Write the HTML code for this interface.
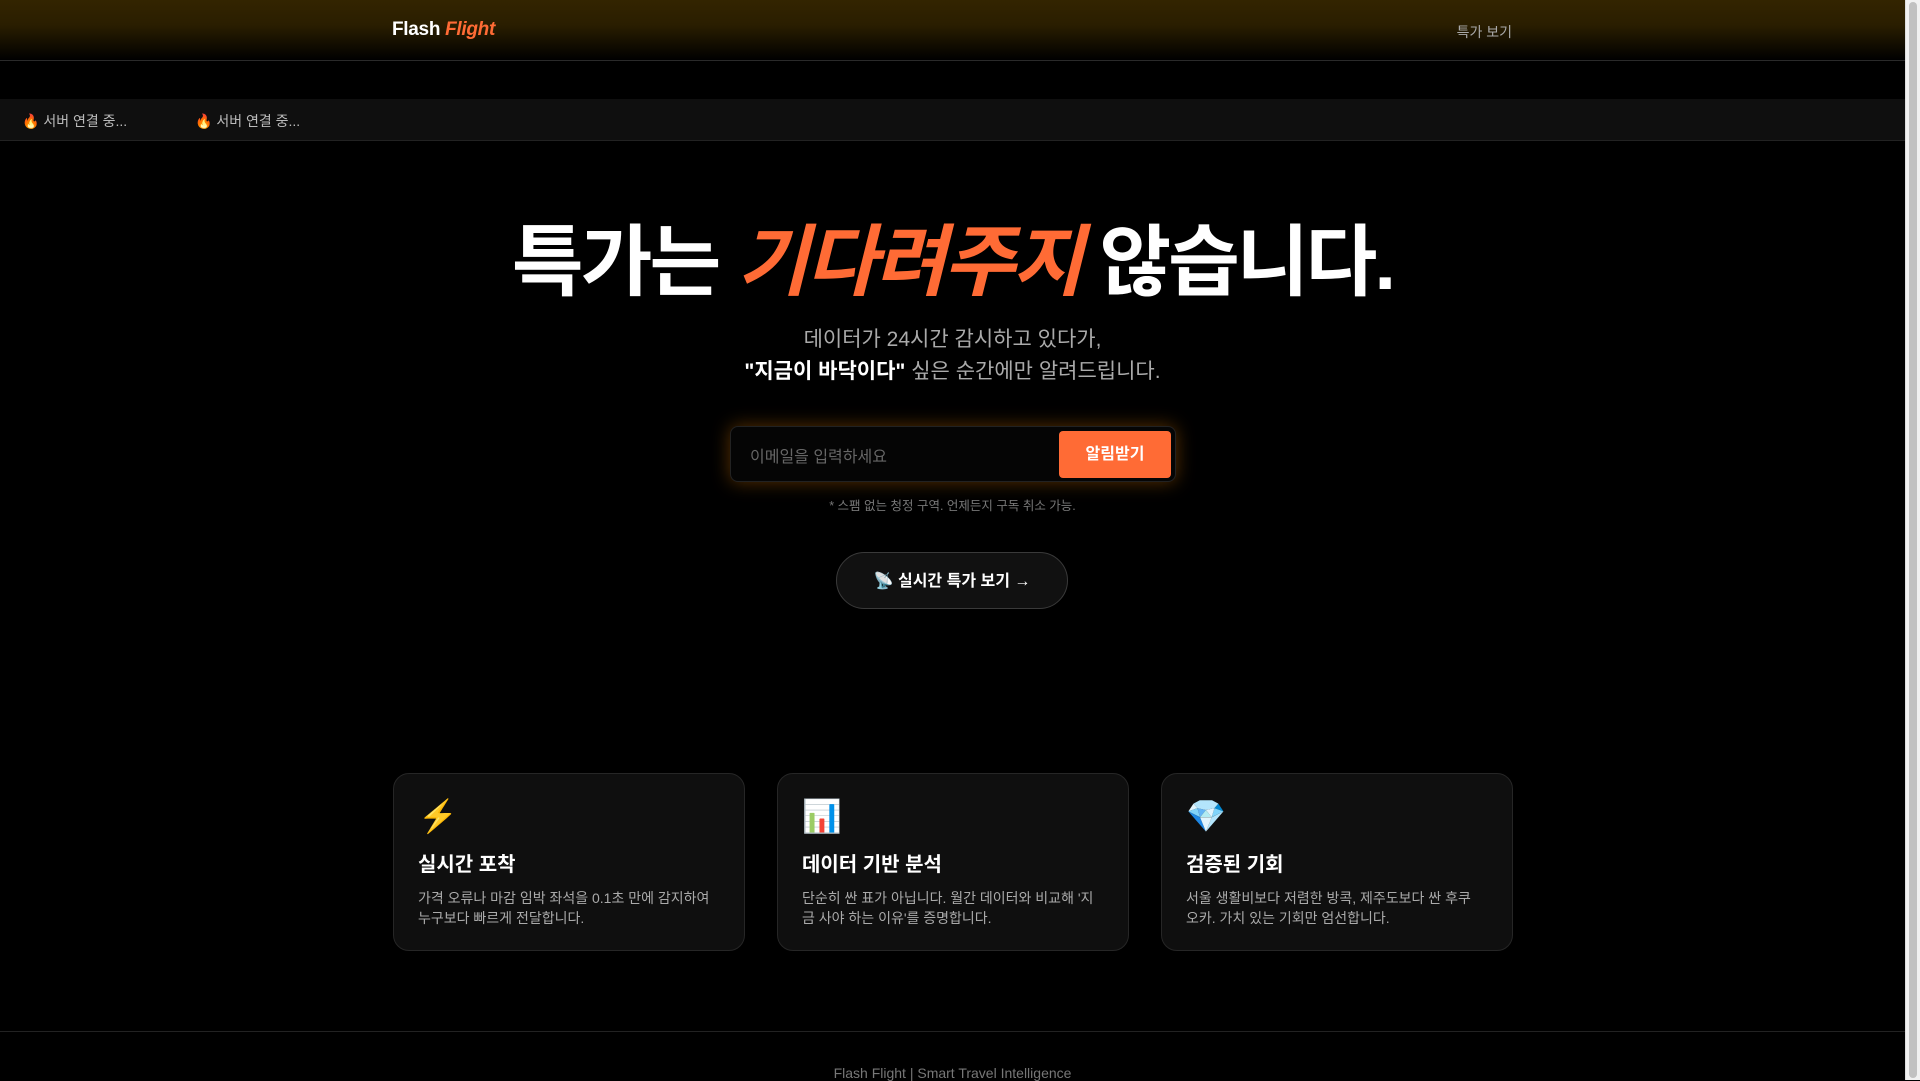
<!DOCTYPE html>
<html><head><meta charset="utf-8"><style>
*{margin:0;padding:0;box-sizing:border-box}
html,body{width:1920px;height:1080px;overflow:hidden;background:#000;font-family:"Liberation Sans","Noto Sans CJK KR",sans-serif;color:#fff}
.sb{position:absolute;right:0;top:0;width:15px;height:1080px;background:#f1f1f1;border-left:1px solid #ddd}
.sb::after{content:"";position:absolute;left:3px;top:2px;width:8px;height:1076px;background:#c1c1c1;border-radius:4px}
.page{position:absolute;left:0;top:0;width:1905px;height:1080px}
header{height:61px;border-bottom:1px solid #2a2a2a;background:linear-gradient(#332400 0px,#2a1e00 25px,#000 60px);position:relative}
.logo{position:absolute;left:392px;top:19px;font-size:19px;font-weight:bold;letter-spacing:-0.3px}
.logo i{color:#ff6b35}
.nav{position:absolute;right:393px;top:22px;font-size:14px;color:#aaa}
.ticker{position:absolute;top:99px;left:0;width:1905px;height:42px;background:#0f0f0f;border-bottom:1px solid #222;font-size:14px;color:#bbb}
.ticker span{position:absolute;top:12px}
h1{position:absolute;top:214px;left:0;width:1905px;text-align:center;font-size:78px;font-weight:bold;letter-spacing:-3px;line-height:96px}
h1 i{color:#ff6b35}
.sub{position:absolute;top:324px;left:0;width:1905px;text-align:center;font-size:21px;line-height:32px;color:#aaa}
.sub b{color:#fff}
.form{position:absolute;left:730px;top:426px;width:446px;height:56px;background:#050505;border:1px solid #222;border-radius:8px;box-shadow:0 0 18px rgba(255,140,0,.35)}
.form .ph{position:absolute;left:19px;top:16px;font-size:16px;color:#666}
.form .btn{position:absolute;right:4px;top:4px;width:112px;height:47px;background:#ff6b35;border-radius:4px;font-size:16px;font-weight:bold;text-align:center;line-height:47px}
.note{position:absolute;top:495px;left:0;width:1905px;text-align:center;font-size:12.5px;color:#777}
.live{position:absolute;left:836px;top:552px;width:232px;height:57px;border:1px solid #3a3a3a;border-radius:29px;background:#111;text-align:center;line-height:57px;font-size:16px;font-weight:bold}
.card{position:absolute;top:773px;width:352px;height:178px;background:#0f0f0f;border:1px solid #262626;border-radius:16px;padding:22px 30px 22px 24px}
.card .ic{font-size:32px;height:40px;line-height:40px}
.card h3{margin-top:15px;font-size:20px;line-height:28px}
.card p{margin-top:9px;font-size:14px;line-height:20px;color:#aaa}
footer{position:absolute;top:1031px;left:0;width:1905px;height:49px;border-top:1px solid #222;text-align:center;font-size:14px;color:#777;padding-top:33px}
</style></head><body>
<div class="page">
<header><div class="logo">Flash <i>Flight</i></div><div class="nav">특가 보기</div></header>
<div class="ticker"><span style="left:22px">🔥 서버 연결 중...</span><span style="left:195px">🔥 서버 연결 중...</span></div>
<h1>특가는 <i>기다려주지</i> 않습니다.</h1>
<div class="sub">데이터가 24시간 감시하고 있다가,<br><b>"지금이 바닥이다"</b> 싶은 순간에만 알려드립니다.</div>
<div class="form"><span class="ph">이메일을 입력하세요</span><div class="btn">알림받기</div></div>
<div class="note">* 스팸 없는 청정 구역. 언제든지 구독 취소 가능.</div>
<div class="live">📡 실시간 특가 보기 →</div>
<div class="card" style="left:393px"><div class="ic">⚡</div><h3>실시간 포착</h3><p>가격 오류나 마감 임박 좌석을 0.1초 만에 감지하여 누구보다 빠르게 전달합니다.</p></div>
<div class="card" style="left:777px"><div class="ic">📊</div><h3>데이터 기반 분석</h3><p>단순히 싼 표가 아닙니다. 월간 데이터와 비교해 '지금 사야 하는 이유'를 증명합니다.</p></div>
<div class="card" style="left:1161px"><div class="ic">💎</div><h3>검증된 기회</h3><p>서울 생활비보다 저렴한 방콕, 제주도보다 싼 후쿠오카. 가치 있는 기회만 엄선합니다.</p></div>
<footer>Flash Flight | Smart Travel Intelligence</footer>
</div>
<div class="sb"></div>
</body></html>
